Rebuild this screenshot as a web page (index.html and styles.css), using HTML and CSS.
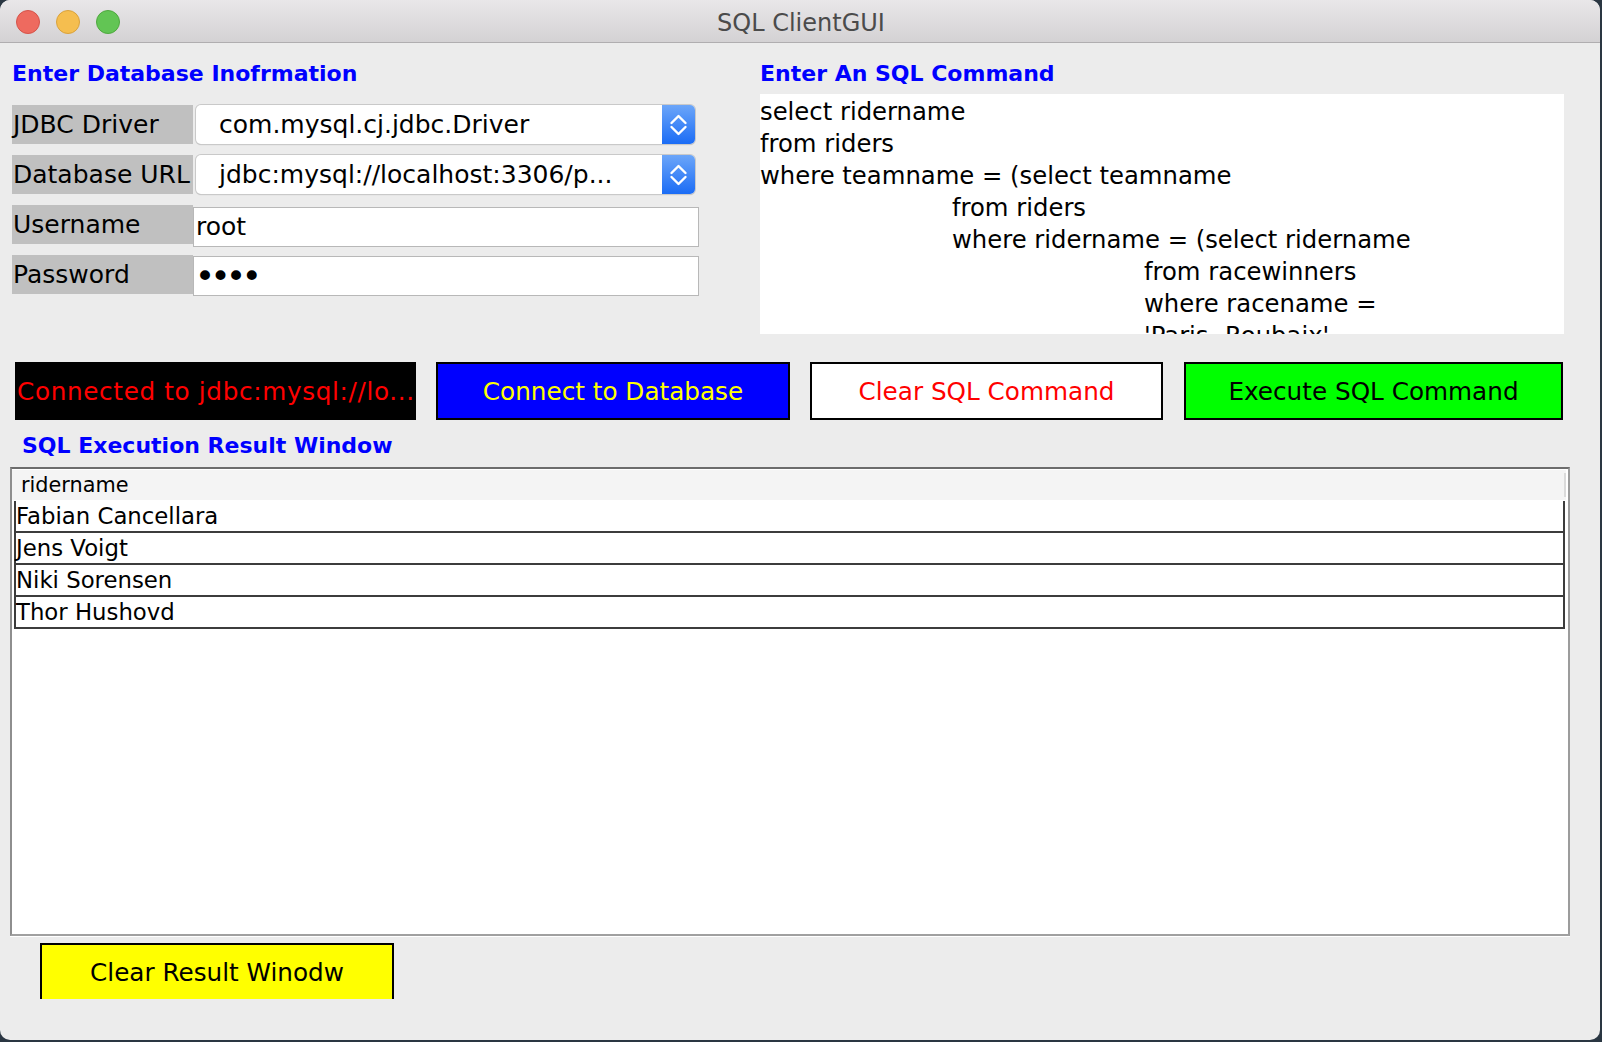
FILE: index.html
```html
<!DOCTYPE html>
<html lang="en">
<head>
<meta charset="utf-8">
<title>SQL ClientGUI</title>
<link rel="stylesheet" href="styles.css">
</head>
<body>
<div class="window">
  <header class="titlebar">
    <div class="lights">
      <span class="light red"></span>
      <span class="light yellow"></span>
      <span class="light green"></span>
    </div>
    <div class="title">SQL ClientGUI</div>
    <div></div>
  </header>
  <main class="content">
    <section class="top">
      <div class="db-panel">
        <h2 class="heading">Enter Database Inofrmation</h2>
        <div class="form">
          <div class="row">
            <span class="label">JDBC Driver</span>
            <div class="combo">
              <span class="combo-text">com.mysql.cj.jdbc.Driver</span>
              <span class="combo-arrow"><svg viewBox="0 0 33 39" width="33" height="39"><path d="M9.5 18 L16.5 11 L23.5 18 M9.5 22 L16.5 29 L23.5 22" fill="none" stroke="#fff" stroke-width="2.4" stroke-linecap="round" stroke-linejoin="round"/></svg></span>
            </div>
          </div>
          <div class="row">
            <span class="label">Database URL</span>
            <div class="combo">
              <span class="combo-text">jdbc:mysql://localhost:3306/p...</span>
              <span class="combo-arrow"><svg viewBox="0 0 33 39" width="33" height="39"><path d="M9.5 18 L16.5 11 L23.5 18 M9.5 22 L16.5 29 L23.5 22" fill="none" stroke="#fff" stroke-width="2.4" stroke-linecap="round" stroke-linejoin="round"/></svg></span>
            </div>
          </div>
          <div class="row">
            <span class="label">Username</span>
            <div class="field">root</div>
          </div>
          <div class="row">
            <span class="label">Password</span>
            <div class="field dots">••••</div>
          </div>
        </div>
      </div>
      <div class="sql-panel">
        <h2 class="heading">Enter An SQL Command</h2>
        <div class="sql-text">
          <div class="line">select ridername</div>
          <div class="line">from riders</div>
          <div class="line">where teamname = (select teamname</div>
          <div class="line i1">from riders</div>
          <div class="line i1">where ridername = (select ridername</div>
          <div class="line i2">from racewinners</div>
          <div class="line i2">where racename =</div>
          <div class="line i2">'Paris- Roubaix'</div>
        </div>
      </div>
    </section>

    <section class="actions">
      <div class="btn status">Connected to jdbc:mysql://lo...</div>
      <button class="btn connect">Connect to Database</button>
      <button class="btn clear">Clear SQL Command</button>
      <button class="btn execute">Execute SQL Command</button>
    </section>

    <h2 class="heading result-heading">SQL Execution Result Window</h2>

    <div class="result-box">
      <div class="result-header"><span class="col-head">ridername</span></div>
      <div class="result-rows">
        <div class="result-row">Fabian Cancellara</div>
        <div class="result-row">Jens Voigt</div>
        <div class="result-row">Niki Sorensen</div>
        <div class="result-row">Thor Hushovd</div>
      </div>
    </div>

    <div class="bottom-bar">
      <div class="clip">
        <button class="btn yellow">Clear Result Winodw</button>
      </div>
    </div>
  </main>
</div>
</body>
</html>
```

FILE: styles.css
```css
* { box-sizing: border-box; }
html, body { margin: 0; padding: 0; }
body {
  width: 1602px;
  height: 1042px;
  overflow: hidden;
  background: #2a3642;
  font-family: "DejaVu Sans", sans-serif;
  color: #000;
}
.window {
  width: 1600px;
  height: 1040px;
  background: #ececec;
  border-radius: 10px;
  overflow: hidden;
  display: flex;
  flex-direction: column;
}
.titlebar {
  flex: none;
  height: 43px;
  background: linear-gradient(#e9e7e9, #d4d2d4);
  border-bottom: 1px solid #b0aeb0;
  display: grid;
  grid-template-columns: 1fr auto 1fr;
  align-items: center;
}
.lights { display: flex; gap: 16px; padding-left: 16px; padding-top: 1px; }
.light { width: 24px; height: 24px; border-radius: 50%; }
.red { background: #ee6a5f; border: 1px solid #d5534a; }
.lights .yellow { background: #f5be4f; border: 1px solid #d9a23c; }
.green { background: #62c554; border: 1px solid #4fa83f; }
.title { font-size: 24px; color: #4b4b4b; padding-top: 3px; padding-left: 2px; }

.content { flex: 1; display: flex; flex-direction: column; }

.heading {
  margin: 0;
  font-size: 22px;
  line-height: 26px;
  height: 26px;
  font-weight: bold;
  color: #0000ff;
  white-space: nowrap;
}

.top {
  display: grid;
  grid-template-columns: 687px 804px;
  column-gap: 61px;
  padding-left: 12px;
  margin-top: 18px;
}
.form { margin-top: 18px; display: flex; flex-direction: column; gap: 11px; }
.row { display: flex; height: 39px; }
.label {
  width: 181px;
  flex: none;
  background: #c0c0c0;
  font-size: 25px;
  line-height: 40px;
  padding-left: 1px;
  white-space: nowrap;
}
.combo {
  flex: none;
  width: 499px;
  margin-left: 3px;
  height: 39px;
  display: flex;
  border-radius: 5px;
  background: #fff;
  box-shadow: 0 0 0 1px #c9c9c9, 0 1px 1px #b5b5b5;
}
.combo-text {
  flex: 1;
  font-size: 25px;
  line-height: 40px;
  padding-left: 23px;
  white-space: nowrap;
}
.combo-arrow {
  width: 33px;
  height: 39px;
  border-radius: 0 5px 5px 0;
  background: linear-gradient(#6ca6f9, #1b6cf5);
  display: block;
}
.combo-arrow svg { display: block; }
.field {
  flex: none;
  width: 506px;
  height: 40px;
  margin-top: 2px;
  background: #fff;
  border: 1px solid #b8b8b8;
  font-size: 25px;
  line-height: 38px;
  padding-left: 2px;
}
.field.dots {
  margin-top: 1px;
  font-size: 34px;
  letter-spacing: -4.5px;
  padding-left: 1px;
}

.sql-text {
  margin-top: 7px;
  height: 240px;
  background: #fff;
  overflow: hidden;
  padding-top: 2px;
  font-size: 24.3px;
  line-height: 32px;
}
.line { white-space: pre; }
.i1 { padding-left: 192px; }
.i2 { padding-left: 384px; }

.actions {
  display: flex;
  margin-top: 28px;
  padding-left: 15px;
  height: 58px;
}
.btn {
  height: 58px;
  border: 2px solid #000;
  font-family: "DejaVu Sans", sans-serif;
  font-size: 24.7px;
  padding: 0;
  margin: 0;
  white-space: nowrap;
  text-align: center;
  line-height: 55px;
}
.status {
  width: 401px;
  background: #000;
  color: #ff0000;
  overflow: hidden;
  letter-spacing: 0.65px;
}
.connect { width: 354px; margin-left: 20px; background: #0000ff; color: #ffff00; }
.clear { width: 353px; margin-left: 20px; background: #fff; color: #ff0000; }
.execute { width: 379px; margin-left: 21px; background: #00ff00; color: #000; }

.result-heading { margin-top: 13px; padding-left: 22px; }

.result-box {
  margin-top: 8px;
  margin-left: 10px;
  width: 1560px;
  height: 469px;
  background: #fff;
  border: 2px solid;
  border-color: #6c6c6c #9c9c9c #a0a0a0 #8e8e8e;
  box-shadow: 0 1px 0 #fff;
  padding-top: 1px;
}
.result-header {
  height: 30px;
  margin-right: 2px;
  background: #f4f4f4;
  display: flex;
}
.col-head {
  flex: 1;
  font-size: 20.8px;
  padding-left: 9px;
  border-right: 2px solid #dadada;
  margin: 3px 0;
  line-height: 24px;
}
.result-rows {
  margin-top: 1px;
  margin-left: 2px;
  width: 1551px;
}
.result-row {
  height: 32px;
  border: 2px solid #3c3c3c;
  border-top: 0;
  font-size: 22.8px;
  line-height: 29px;
  padding-top: 1px;
  white-space: nowrap;
}

.bottom-bar { margin-top: 7px; padding-left: 40px; }
.clip { height: 56px; overflow: hidden; width: 354px; }
.btn.yellow {
  width: 354px;
  background: #ffff00;
  color: #000;
}
```
